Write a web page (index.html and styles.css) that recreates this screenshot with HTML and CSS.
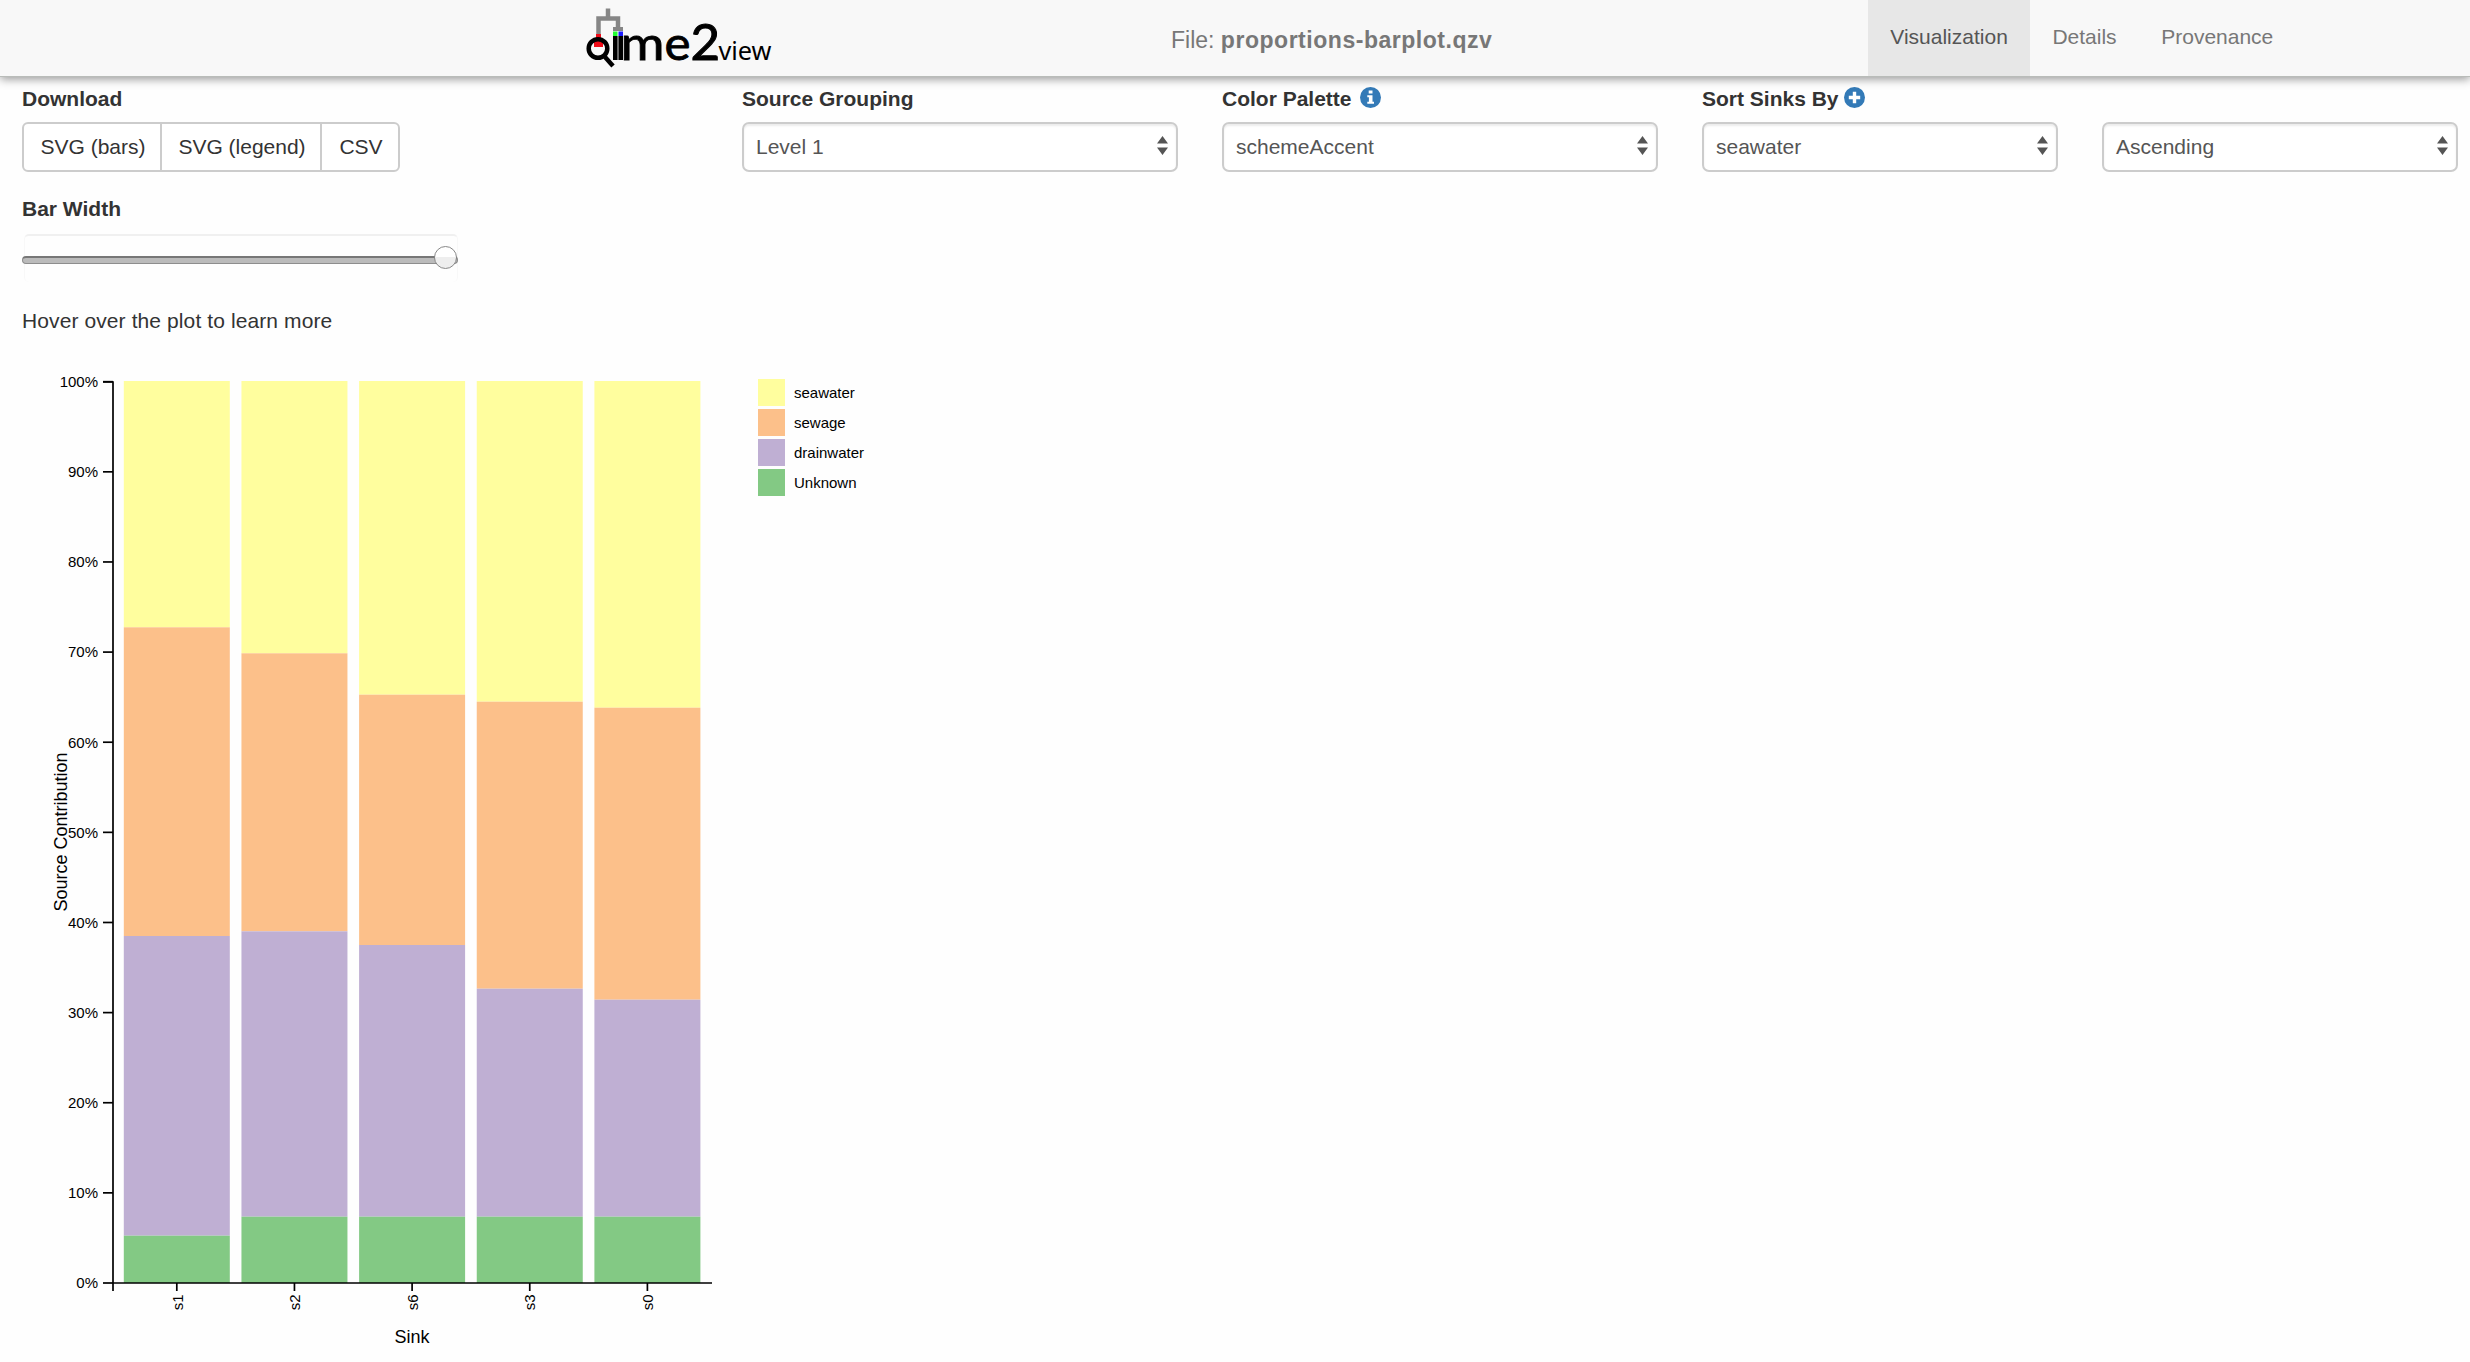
FILE: index.html
```
<!DOCTYPE html>
<html lang="en">
<head>
<meta charset="utf-8">
<title>QIIME 2 View</title>
<link rel="stylesheet" href="styles.css">
</head>
<body>
<header class="navbar">
  <svg class="logo" width="200" height="76" viewBox="570 0 200 76">
    <path class="tree" d="M608 8.500V19M598.500 35V18.500H618V28"/>
    <rect class="tree-fill" x="613" y="27" width="10" height="4"/>
    <rect x="596" y="34" width="5" height="12.500" fill="#f00c18"/>
    <rect x="594" y="41" width="9" height="6" fill="#f00c18"/>
    <rect x="613" y="31.500" width="4.500" height="4.500" fill="#2f3"/>
    <rect x="618.500" y="31.500" width="4.500" height="4.500" fill="#1c1cff"/>
    <circle class="lens" cx="598" cy="48.500" r="9.300"/>
    <path class="lens" d="M605 57L613 66"/>
    <rect x="613" y="36" width="10" height="24" fill="#666"/>
    <path class="stem" d="M615 36V60M621 36V60"/>
    <text class="word" x="620.500" y="59.500" textLength="44" lengthAdjust="spacingAndGlyphs">m</text>
    <text class="word" x="664.500" y="59.500" textLength="26" lengthAdjust="spacingAndGlyphs">e</text>
    <text class="two" x="690.500" y="59.500">2</text>
    <text class="view" x="718.500" y="59.500" textLength="53" lengthAdjust="spacingAndGlyphs">view</text>
  </svg>
  <div class="file">File: <b>proportions-barplot.qzv</b></div>
  <nav class="tabs"><a class="active">Visualization</a><a>Details</a><a>Provenance</a></nav>
</header>
<main>
  <section class="controls">
    <div class="field download">
      <label>Download</label>
      <div class="group"><button>SVG (bars)</button><button>SVG (legend)</button><button>CSV</button></div>
    </div>
    <div class="field wide">
      <label>Source Grouping</label>
      <div class="select">Level 1<svg width="11" height="19"><path d="M5.500 0L11 7.500H0zM5.500 19L11 11.500H0z"/></svg></div>
    </div>
    <div class="field wide">
      <label>Color Palette <svg class="badge info" width="21" height="21" viewBox="0 0 21 21"><circle cx="10.500" cy="10.500" r="10.500"/><path fill="#fff" d="M8.700 3.500h3.800v3H8.700zM7.300 8.200h5.200v6.500h1.500v2.100H7.300v-2.100h1.600v-4.400H7.300z"/></svg></label>
      <div class="select">schemeAccent<svg width="11" height="19"><path d="M5.500 0L11 7.500H0zM5.500 19L11 11.500H0z"/></svg></div>
    </div>
    <div class="field narrow">
      <label>Sort Sinks By <svg class="badge" width="21" height="21" viewBox="0 0 21 21"><circle cx="10.500" cy="10.500" r="10.500"/><path fill="#fff" d="M8.800 4.800h3.400v4h4v3.400h-4v4H8.800v-4h-4V8.800h4z"/></svg></label>
      <div class="select">seawater<svg width="11" height="19"><path d="M5.500 0L11 7.500H0zM5.500 19L11 11.500H0z"/></svg></div>
    </div>
    <div class="field narrow">
      <label>&nbsp;</label>
      <div class="select">Ascending<svg width="11" height="19"><path d="M5.500 0L11 7.500H0zM5.500 19L11 11.500H0z"/></svg></div>
    </div>
  </section>
  <section class="width">
    <label>Bar Width</label>
    <div class="slider"><div class="track"></div><div class="thumb"></div></div>
  </section>
  <p class="hint">Hover over the plot to learn more</p>
  <svg class="plot" width="1000" height="1002" viewBox="0 360 1000 1002">
    <g id="bars"></g>
    <path class="axis" d="M103 381H113V1290M113 1282H712"/>
    <g id="ticks"></g>
    <text class="title" text-anchor="middle" transform="translate(66.500 831) rotate(-90)">Source Contribution</text>
    <text class="title" text-anchor="middle" x="412" y="1342">Sink</text>
    <g id="legend"></g>
  </svg>
</main>
<script src="plot.js"></script>
</body>
</html>
```
FILE: styles.css
```
* { box-sizing: border-box; }
body { margin: 0; height: 1362px; overflow: hidden; background: #fefefe; color: #333; font: 21px/30px "Liberation Sans", Arial, sans-serif; }
.navbar { position: relative; height: 77px; display: flex; align-items: flex-start; padding-left: 570px; background: #f8f8f8; border-bottom: 1px solid #b9bcb9; box-shadow: 0 2px 9px rgba(0,0,0,.42); }
.logo { flex: none; width: 200px; overflow: visible; }
.tree { fill: none; stroke: #868686; stroke-width: 4.500; }
.tree-fill { fill: #868686; }
.lens { fill: none; stroke: #000; stroke-width: 4.500; }
.stem { stroke: #000; stroke-width: 4; }
.word { font: 46px Lato, sans-serif; fill: #000; stroke: #000; stroke-width: .8; }
.two { font: 51px Lato, sans-serif; fill: #000; stroke: #000; stroke-width: 1; }
.view { font: 25px "Noto Sans", sans-serif; fill: #000; }
.file { flex: none; width: 1098px; padding: 25px 0 0 401px; white-space: nowrap; color: #777; font-size: 23px; }
.file b { letter-spacing: .53px; }
.tabs { display: flex; height: 76px; color: #777; }
.tabs a { padding: 22px 22.300px 0; }
.tabs .active { background: #e7e7e7; color: #555; }
main { padding-left: 22px; }
.controls { display: flex; gap: 44px; height: 107px; padding-top: 7px; }
.field { flex: none; }
.download { width: 676px; }
.wide { width: 436px; }
.narrow { width: 356px; }
label { display: block; height: 30px; font-weight: bold; white-space: nowrap; }
.badge { fill: #337ab7; vertical-align: -2px; }
.info { margin-left: 3px; }
.group, .select { display: flex; height: 50px; margin-top: 8px; }
.group button { font: inherit; color: #333; background: #fff; border: 2px solid #ccc; padding: 0 0 0 2px; width: 162px; margin-left: -2px; }
.group button:first-child { width: 140px; margin: 0; border-radius: 6px 0 0 6px; }
.group button:last-child { width: 80px; border-radius: 0 6px 6px 0; }
.select { align-items: center; justify-content: space-between; background: #fff; border: 2px solid #ccc; border-radius: 7px; padding: 0 8px 1px 12px; color: #555; box-shadow: inset 0 2px 2px rgba(0,0,0,.075); }
.select svg { fill: #555; margin-top: -2px; }
.width { height: 108px; padding-top: 10px; }
.slider { position: relative; width: 436px; height: 48px; margin-top: 10px; }
.slider::before { content: ""; display: block; width: 432px; height: 46px; margin-left: 2px; border-top: 2px solid #f0f0f0; border-left: 1px solid #f8f8f8; border-right: 1px solid #f8f8f8; border-radius: 5px; }
.track { position: absolute; left: 0; top: 22px; width: 436px; height: 8px; border-radius: 4px; background: #bbb; border: 1px solid #8d8d8d; border-top: 2px solid #777; }
.thumb { position: absolute; left: 412px; top: 12px; width: 23px; height: 23px; border: 1.500px solid #888; border-radius: 50%; background: linear-gradient(#fff 0 50%, #eee 50%); }
.hint { margin: 14px 0 25px; height: 30px; letter-spacing: .1px; }
.plot { display: block; margin-left: -22px; }
.axis { fill: none; stroke: #000; stroke-width: 1.700; }
.tick { font-size: 15px; fill: #000; }
.title { font-size: 18px; fill: #000; }
```
FILE: plot.js
```
const ns = "http://www.w3.org/2000/svg";
const colors = ["#fffe9e", "#fcc08a", "#bfafd3", "#83c984"];
const add = (parent, tag, attrs, text) => {
  const node = document.createElementNS(ns, tag);
  for (const key in attrs) node.setAttribute(key, attrs[key]);
  if (text) node.textContent = text;
  document.getElementById(parent).appendChild(node);
};
const sinks = [
  ["s1", 626.3, 935, 1234.7],
  ["s2", 652.3, 930.3, 1215.7],
  ["s6", 693.7, 944, 1215.7],
  ["s3", 700.7, 987.7, 1215.7],
  ["s0", 706.7, 998.7, 1215.7]
];
sinks.forEach(([name, ...cuts], i) => {
  const x = 123.8 + i * 117.65;
  const ys = [380, ...cuts, 1282];
  colors.forEach((fill, k) => add("bars", "rect", { x, y: ys[k], width: 106, height: ys[k + 1] - ys[k], fill }));
  add("ticks", "path", { class: "axis", d: `M${x + 53} 1282V1290` });
  add("ticks", "text", { class: "tick", "text-anchor": "end", transform: `translate(${x + 58.7} 1293.5) rotate(-90)` }, name);
});
for (let i = 0; i <= 10; i++) {
  const y = 1282 - i * 90.13;
  add("ticks", "path", { class: "axis", d: `M103 ${y}H113` });
  add("ticks", "text", { class: "tick", "text-anchor": "end", x: 98, y: y + 5.3 }, `${i * 10}%`);
}
["seawater", "sewage", "drainwater", "Unknown"].forEach((name, i) => {
  add("legend", "rect", { x: 758, y: 378 + i * 30, width: 27, height: 27, fill: colors[i] });
  add("legend", "text", { class: "tick", x: 794, y: 397 + i * 30 }, name);
});
```
